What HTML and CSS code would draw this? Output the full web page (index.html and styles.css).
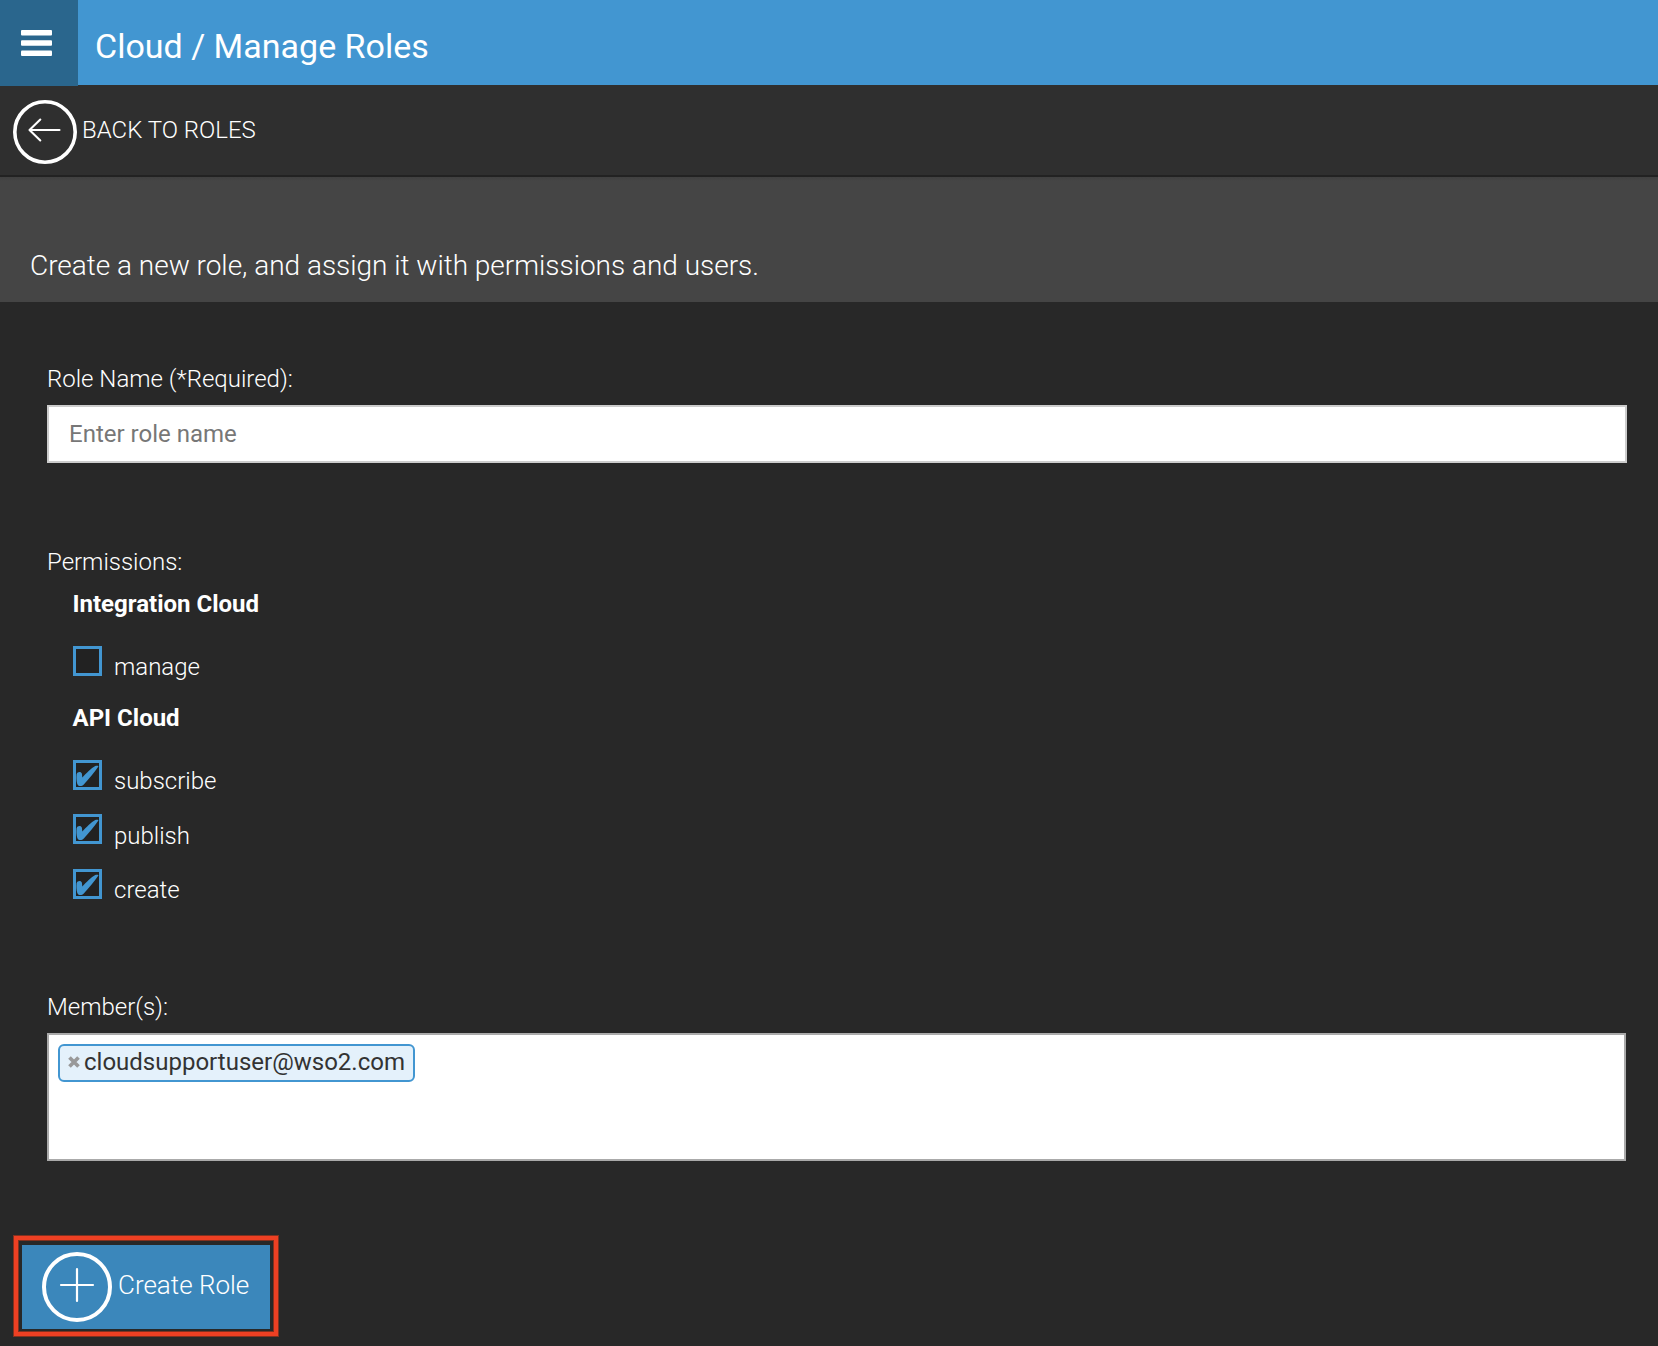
FILE: index.html
```html
<!DOCTYPE html>
<html lang="en">
<head>
<meta charset="utf-8">
<title>Cloud / Manage Roles</title>
<link rel="stylesheet" href="styles.css">
</head>
<body>
<header class="topbar">
  <button class="menu" aria-label="Menu">
    <svg width="31" height="26" viewBox="0 0 31 26"><g fill="#fff"><rect width="31" height="5.4" rx="1"/><rect y="10.3" width="31" height="5.4" rx="1"/><rect y="20.6" width="31" height="5.4" rx="1"/></g></svg>
  </button>
  <h1 class="title">Cloud / Manage Roles</h1>
</header>
<nav class="subbar">
  <a class="back">
    <svg width="64" height="64" viewBox="0 0 64 64" fill="none" stroke="#fff"><circle cx="32" cy="32" r="30.2" stroke-width="3.6"/><path d="M46.500 30H16.500M27.300 19.500L16.500 30L27.300 40.500" stroke-width="2.1" stroke-linecap="round" stroke-linejoin="round"/></svg>
    <span class="back-text">BACK TO ROLES</span>
  </a>
</nav>
<section class="banner"><p class="lead">Create a new role, and assign it with permissions and users.</p></section>
<main class="form">
  <label class="label role-label" for="role">Role Name (*Required):</label>
  <input class="input" id="role" type="text" placeholder="Enter role name">
  <div class="label perm-label">Permissions:</div>
  <div class="permissions">
    <h2 class="group">Integration Cloud</h2>
    <div class="option manage"><span class="box"></span><span class="name">manage</span></div>
    <h2 class="group">API Cloud</h2>
    <div class="option"><span class="box"><svg class="tick" viewBox="0 0 23 24"><path d="M.6 11.300C1.300 8.500 5.200 8.400 5.900 10.800L6.300 14.500C10 10.500 15.400 5.100 19.200 3C20.500 2.500 22.800 2.400 22.400 3.600C18.500 9.500 12.500 16.500 7.800 21.600C5.500 23.800 2.500 23.600 1.300 20.900C.4 18.500.2 14.500.6 11.300Z"/></svg></span><span class="name">subscribe</span></div>
    <div class="option publish"><span class="box"><svg class="tick" viewBox="0 0 23 24"><path d="M.6 11.300C1.300 8.500 5.200 8.400 5.900 10.800L6.300 14.500C10 10.500 15.400 5.100 19.200 3C20.500 2.500 22.800 2.400 22.400 3.600C18.500 9.500 12.500 16.500 7.800 21.600C5.500 23.800 2.500 23.600 1.300 20.900C.4 18.500.2 14.500.6 11.300Z"/></svg></span><span class="name">publish</span></div>
    <div class="option"><span class="box"><svg class="tick" viewBox="0 0 23 24"><path d="M.6 11.300C1.300 8.500 5.200 8.400 5.900 10.800L6.300 14.500C10 10.500 15.400 5.100 19.200 3C20.500 2.500 22.800 2.400 22.400 3.600C18.500 9.500 12.500 16.500 7.800 21.600C5.500 23.800 2.500 23.600 1.300 20.900C.4 18.500.2 14.500.6 11.300Z"/></svg></span><span class="name">create</span></div>
  </div>
  <div class="label member-label">Member(s):</div>
  <div class="members">
    <span class="tag"><svg class="remove" width="12" height="12" viewBox="0 0 12 12"><path d="M1.500 1.500L10.500 10.500M10.500 1.500L1.500 10.500" stroke="#999" stroke-width="3.700"/></svg><span class="email">cloudsupportuser@wso2.com</span></span>
  </div>
</main>
<div class="highlight">
  <button class="create">
    <svg width="70" height="70" viewBox="0 0 70 70" fill="none" stroke="#fff"><circle cx="35" cy="35" r="33" stroke-width="4"/><path d="M35 17V49M19 33H51" stroke-width="2.200" stroke-linecap="round"/></svg>
    <span class="create-text">Create Role</span>
  </button>
</div>
</body>
</html>
```
FILE: styles.css
```css
* { box-sizing: border-box; }
body { margin: 0; height: 1346px; overflow: hidden; background: #282828; color: #fff; font-family: Roboto, sans-serif; font-size: 24px; font-weight: 300; }
h1, h2, p { margin: 0; }
button { border: 0; padding: 0; font: inherit; color: inherit; }
svg { display: block; flex: none; }
span { white-space: nowrap; }
.topbar { display: flex; height: 85px; background: #4296d1; }
.menu { width: 78px; height: 86px; flex: none; padding: 30px 0 0 21px; background: #2a668d; display: flex; align-items: flex-start; z-index: 1; }
.title { padding-left: 17px; line-height: 40px; padding-top: 26px; font-size: 34px; font-weight: 400; }
.subbar { height: 92px; background: #2f2f2f; border-bottom: 2px solid #222; padding: 15px 0 0 13px; }
.back { display: flex; }
.back-text { padding-left: 5px; line-height: 60px; }
.banner { height: 125px; background: linear-gradient(#404040, #454545 4px); padding: 69px 0 0 30px; }
.lead { font-size: 28px; line-height: 40px; letter-spacing: -0.02px; }
.form { height: 934px; padding: 61px 31px 0 47px; }
.label { display: block; line-height: 32px; }
.input { display: block; width: 100%; height: 58px; margin-top: 10px; padding: 0 20px; border: 2px solid #ccc; border-radius: 0; background: #fff; color: #555; font: 400 24px Roboto, sans-serif; }
.input::placeholder { color: #777; opacity: 1; }
.perm-label { margin-top: 83px; }
.permissions { padding-left: 26px; }
.group { height: 52px; margin: 10px 0 0 -0.5px; font-size: 24px; line-height: 32px; font-weight: 700; }
.option { display: flex; height: 54px; padding-top: 6px; }
.option.manage { height: 52px; }
.option.publish { height: 55px; }
.box { width: 29px; height: 30px; border: 3px solid #4296d1; background: #222; flex: none; }
.tick { width: 23px; height: 24px; fill: #4296d1; }
.name { padding-left: 12px; line-height: 32px; padding-top: 5px; }
.publish .name { padding-top: 6px; }
.member-label { margin-top: 74px; }
.members { width: 1579px; height: 128px; margin-top: 10px; padding: 9px; border: 2px solid #aaa; background: #fff; }
.tag { display: inline-flex; width: 357px; height: 38px; align-items: center; border: 2px solid #4296d1; border-radius: 6px; background: #e4f1fb; color: #333; font-weight: 400; padding-left: 8px; }
.remove { margin-top: -3px; }
.email { padding: 0 0 2px 4px; line-height: 32px; }
.highlight { width: 264px; height: 100px; margin-left: 14px; border: 4px solid #ee4023; box-shadow: 0 0 0 1px #83311f, inset 0 0 0 1px #83311f; padding: 5px 4px; }
.create { display: flex; width: 248px; height: 84px; background: #3b87bb; padding: 7px 0 0 20px; }
.create-text { padding-left: 6px; font-size: 26px; line-height: 66px; }
```
